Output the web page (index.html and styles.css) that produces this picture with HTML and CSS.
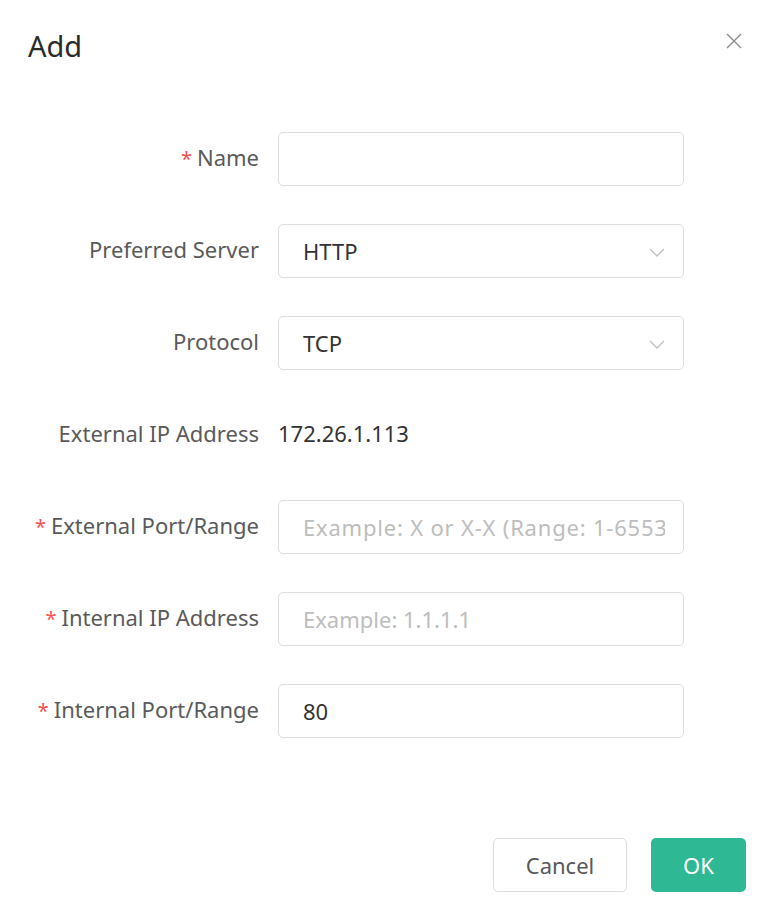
FILE: index.html
```html
<!DOCTYPE html>
<html lang="en">
<head>
<meta charset="utf-8">
<title>Add</title>
<link rel="stylesheet" href="styles.css">
</head>
<body>
<div class="dialog">
  <header class="dialog-header">
    <h1 class="dialog-title">Add</h1>
    <button class="close-btn" aria-label="Close">
      <svg width="16" height="16" viewBox="0 0 16 16"><path d="M1 1L15 15M15 1L1 15" stroke="#8c8c8c" stroke-width="1.4" fill="none"/></svg>
    </button>
  </header>
  <form class="form">
    <div class="row">
      <label class="label"><span class="req">*</span>Name</label>
      <div class="control"><div class="input"></div></div>
    </div>
    <div class="row">
      <label class="label">Preferred Server</label>
      <div class="control"><div class="input select"><span class="value">HTTP</span>
        <svg class="chev" width="16" height="9" viewBox="0 0 16 9"><path d="M1 1L8 8L15 1" stroke="#bfbfbf" stroke-width="1.3" fill="none"/></svg></div></div>
    </div>
    <div class="row">
      <label class="label">Protocol</label>
      <div class="control"><div class="input select"><span class="value">TCP</span>
        <svg class="chev" width="16" height="9" viewBox="0 0 16 9"><path d="M1 1L8 8L15 1" stroke="#bfbfbf" stroke-width="1.3" fill="none"/></svg></div></div>
    </div>
    <div class="row">
      <label class="label">External IP Address</label>
      <div class="control"><span class="static">172.26.1.113</span></div>
    </div>
    <div class="row">
      <label class="label"><span class="req">*</span>External Port/Range</label>
      <div class="control"><div class="input"><span class="placeholder clip">Example: X or X-X (Range: 1-65535)</span></div></div>
    </div>
    <div class="row">
      <label class="label"><span class="req">*</span>Internal IP Address</label>
      <div class="control"><div class="input"><span class="placeholder">Example: 1.1.1.1</span></div></div>
    </div>
    <div class="row">
      <label class="label"><span class="req">*</span>Internal Port/Range</label>
      <div class="control"><div class="input"><span class="value">80</span></div></div>
    </div>
  </form>
  <footer class="footer">
    <button class="btn btn-cancel" type="button">Cancel</button>
    <button class="btn btn-ok" type="button">OK</button>
  </footer>
</div>
</body>
</html>
```
FILE: styles.css
```css
* { box-sizing: border-box; }
html, body {
  margin: 0;
  padding: 0;
  background: #fff;
}
body {
  font-family: "Noto Sans", "Open Sans", sans-serif;
  color: #595959;
  width: 758px;
  height: 914px;
  overflow: hidden;
}
.dialog {
  width: 758px;
  padding: 0 12px 0 0;
}
.dialog-header {
  display: flex;
  justify-content: space-between;
  align-items: flex-start;
  padding: 26px 4px 0 28px;
  height: 132px;
}
.dialog-title {
  margin: 0;
  font-size: 29px;
  font-weight: 400;
  line-height: 40px;
  color: #2b2b2b;
}
.close-btn {
  margin-top: 7px;
  border: 0;
  background: none;
  padding: 0;
  width: 16px;
  height: 16px;
  display: flex;
}
.form {
  display: flex;
  flex-direction: column;
  gap: 38px;
}
.row {
  display: flex;
  align-items: center;
  height: 54px;
}
.label {
  width: 259px;
  text-align: right;
  font-size: 22px;
  color: #5a5a5a;
  margin-right: 19px;
  margin-top: -5px;
  white-space: nowrap;
}
.req {
  color: #f5504f;
  margin-right: 5px;
  font-size: 20px;
}
.control {
  width: 406px;
  height: 54px;
  display: flex;
  align-items: center;
}
.input {
  width: 406px;
  height: 54px;
  border: 1.5px solid #dedede;
  border-radius: 5px;
  display: flex;
  align-items: center;
  padding: 0 18px 0 24px;
  font-size: 22px;
  overflow: hidden;
  white-space: nowrap;
}
.value { color: #333; }
.placeholder { color: #bdbdbd; }
.clip {
  display: block;
  width: 362px;
  overflow: hidden;
  letter-spacing: 0.8px;
}
.select { justify-content: space-between; }
.chev { flex: none; margin-top: 2px; }
.static {
  font-size: 22px;
  color: #333;
  margin-top: -5px;
}
.footer {
  display: flex;
  justify-content: flex-end;
  gap: 24px;
  margin-top: 100px;
}
.btn {
  height: 54px;
  border-radius: 5px;
  font-family: "Noto Sans", "Open Sans", sans-serif;
  font-size: 22px;
  cursor: pointer;
}
.btn-cancel {
  width: 134px;
  background: #fff;
  border: 1.5px solid #dedede;
  color: #595959;
}
.btn-ok {
  width: 95px;
  background: #2fb894;
  border: 0;
  color: #fff;
}
```
